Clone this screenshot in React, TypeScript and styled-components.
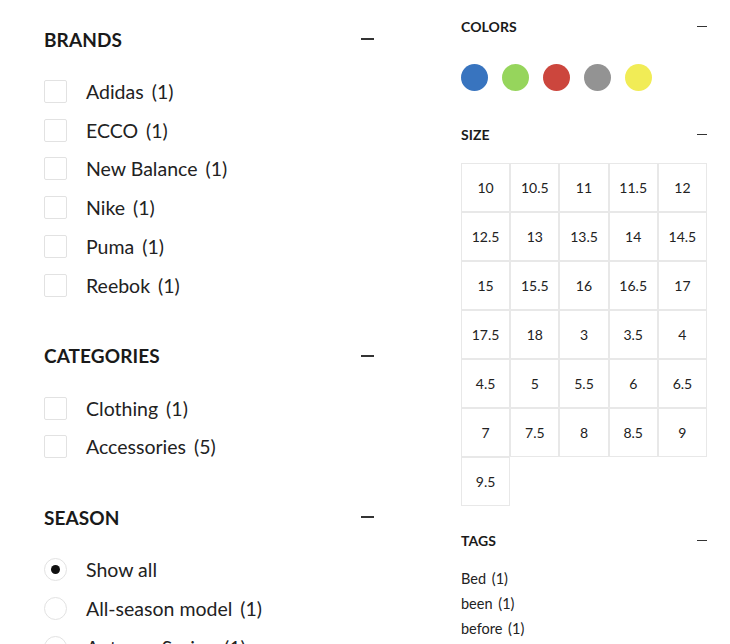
import React from "react";
import styled, { createGlobalStyle } from "styled-components";

const GlobalStyle = createGlobalStyle`
  html, body {
    margin: 0;
    padding: 0;
    background: #fff;
  }
  body {
    font-family: Lato, "Liberation Sans", sans-serif;
    color: #1f1f1f;
  }
`;

const Page = styled.div`
  display: flex;
  width: 730px;
  height: 644px;
  overflow: hidden;
`;

const LeftColumn = styled.div`
  width: 330px;
  padding: 27px 0 0 44px;
  display: flex;
  flex-direction: column;
  gap: 39px;
`;

const RightColumn = styled.div`
  width: 246px;
  margin-left: 87px;
  padding-top: 18px;
  display: flex;
  flex-direction: column;
`;

const SectionHead = styled.div<{ $small?: boolean }>`
  display: flex;
  align-items: center;
  justify-content: space-between;
  height: ${(p) => (p.$small ? "18px" : "24px")};
  font-weight: 700;
  font-size: ${(p) => (p.$small ? "14px" : "19px")};
  letter-spacing: 0.1px;
  color: #1a1a1a;
`;

const Minus = styled.span<{ $small?: boolean }>`
  display: block;
  width: ${(p) => (p.$small ? "10px" : "13px")};
  height: ${(p) => (p.$small ? "1.5px" : "2px")};
  background: #333;
`;

const List = styled.ul`
  list-style: none;
  margin: 21px 0 0;
  padding: 0;
`;

const Row = styled.li`
  display: flex;
  align-items: center;
  height: 38.8px;
  font-size: 19.5px;
  color: #222;
`;

const Box = styled.span<{ $round?: boolean }>`
  display: flex;
  align-items: center;
  justify-content: center;
  box-sizing: border-box;
  width: 23px;
  height: 23px;
  border: 1px solid #e2e2e2;
  border-radius: ${(p) => (p.$round ? "50%" : "2px")};
  margin-right: 19px;
  flex-shrink: 0;
`;

const Dot = styled.span`
  width: 9px;
  height: 9px;
  border-radius: 50%;
  background: #111;
`;

const Count = styled.span`
  margin-left: 8px;
`;

const Swatches = styled.div`
  display: flex;
  gap: 14px;
  margin: 29px 0 35px;
`;

const Swatch = styled.span<{ $color: string }>`
  width: 27px;
  height: 27px;
  border-radius: 50%;
  background: ${(p) => p.$color};
`;

const SizeGrid = styled.div`
  display: grid;
  grid-template-columns: repeat(5, 1fr);
  grid-auto-rows: 49px;
  margin: 20px 0 26px;
`;

const SizeCell = styled.div`
  display: flex;
  align-items: center;
  justify-content: center;
  border: 1px solid #e8e8e8;
  font-size: 14px;
  color: #222;
`;

const TagList = styled.div`
  margin-top: 17px;
  display: flex;
  flex-direction: column;
`;

const Tag = styled.div`
  font-size: 14.5px;
  line-height: 25px;
  word-spacing: 2px;
  color: #222;
`;

const brands = [
  ["Adidas", 1],
  ["ECCO", 1],
  ["New Balance", 1],
  ["Nike", 1],
  ["Puma", 1],
  ["Reebok", 1],
] as const;

const categories = [
  ["Clothing", 1],
  ["Accessories", 5],
] as const;

const seasons = [
  { label: "Show all", checked: true },
  { label: "All-season model", count: 1 },
  { label: "Autumn-Spring", count: 1 },
];

const colors = ["#3874bf", "#96d55c", "#cc463d", "#939393", "#f1ec56"];

const sizes = [
  "10", "10.5", "11", "11.5", "12",
  "12.5", "13", "13.5", "14", "14.5",
  "15", "15.5", "16", "16.5", "17",
  "17.5", "18", "3", "3.5", "4",
  "4.5", "5", "5.5", "6", "6.5",
  "7", "7.5", "8", "8.5", "9",
  "9.5",
];

const tags = [
  ["Bed", 1],
  ["been", 1],
  ["before", 1],
  ["best", 1],
];

export default function App() {
  return (
    <>
      <GlobalStyle />
      <Page>
        <LeftColumn>
          <section>
            <SectionHead>
              BRANDS <Minus />
            </SectionHead>
            <List>
              {brands.map(([name, n]) => (
                <Row key={name}>
                  <Box />
                  {name}
                  <Count>({n})</Count>
                </Row>
              ))}
            </List>
          </section>

          <section>
            <SectionHead>
              CATEGORIES <Minus />
            </SectionHead>
            <List>
              {categories.map(([name, n]) => (
                <Row key={name}>
                  <Box />
                  {name}
                  <Count>({n})</Count>
                </Row>
              ))}
            </List>
          </section>

          <section>
            <SectionHead>
              SEASON <Minus />
            </SectionHead>
            <List>
              {seasons.map((s) => (
                <Row key={s.label}>
                  <Box $round>{s.checked && <Dot />}</Box>
                  {s.label}
                  {s.count !== undefined && <Count>({s.count})</Count>}
                </Row>
              ))}
            </List>
          </section>
        </LeftColumn>

        <RightColumn>
          <SectionHead $small>
            COLORS <Minus $small />
          </SectionHead>
          <Swatches>
            {colors.map((c) => (
              <Swatch key={c} $color={c} />
            ))}
          </Swatches>

          <SectionHead $small>
            SIZE <Minus $small />
          </SectionHead>
          <SizeGrid>
            {sizes.map((s) => (
              <SizeCell key={s}>{s}</SizeCell>
            ))}
          </SizeGrid>

          <SectionHead $small>
            TAGS <Minus $small />
          </SectionHead>
          <TagList>
            {tags.map(([t, n]) => (
              <Tag key={t}>
                {t} ({n})
              </Tag>
            ))}
          </TagList>
        </RightColumn>
      </Page>
    </>
  );
}
